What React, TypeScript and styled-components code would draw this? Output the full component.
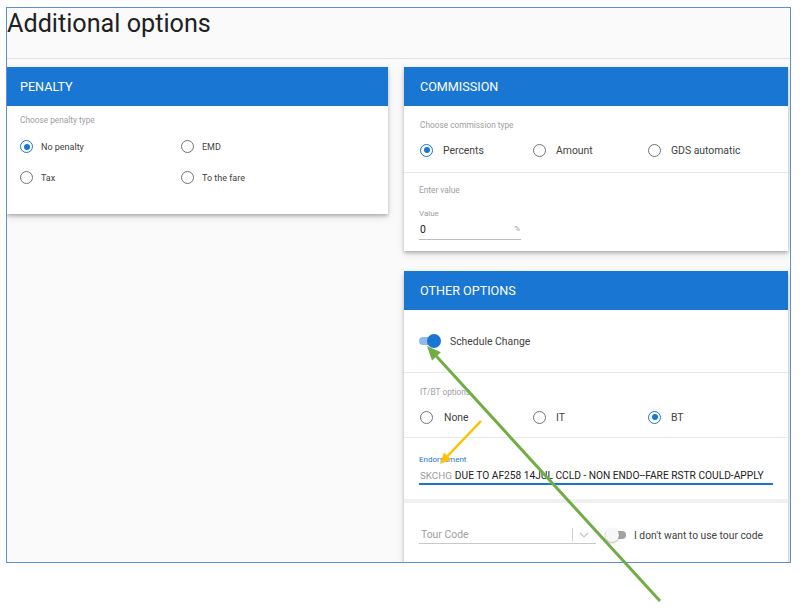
import React from 'react';
import styled, { createGlobalStyle } from 'styled-components';

const Global = createGlobalStyle`
  html, body { margin: 0; padding: 0; background: #ffffff; }
  body { font-family: Roboto, "Noto Sans", Arial, sans-serif; color: #424242; }
  * { box-sizing: border-box; }
`;

const Page = styled.div`
  position: relative;
  width: 800px;
  height: 610px;
  overflow: hidden;
  padding: 7px 0 0 6px;
`;

const Frame = styled.div`
  width: 785px;
  height: 556px;
  border: 1px solid #5b8ee0;
  background: #fafafa;
  overflow: hidden;
`;

const TitleBar = styled.div`
  height: 51px;
  border-bottom: 1px solid #e2e2e2;
  padding-top: 1px;
  font-size: 25.2px;
  line-height: 30px;
  color: #212121;
`;

const Columns = styled.div`
  display: grid;
  grid-template-columns: 381px 384px;
  column-gap: 16px;
  margin-top: 8px;
  align-items: start;
`;

const Stack = styled.div`
  display: flex;
  flex-direction: column;
  gap: 20px;
`;

const Card = styled.div`
  background: #ffffff;
  box-shadow: 0 2px 3px rgba(0, 0, 0, 0.22), 0 3px 8px rgba(0, 0, 0, 0.12);
`;

const CardHeader = styled.div<{ $pl?: number }>`
  height: 39px;
  background: #1976d2;
  color: #ffffff;
  font-size: 12.6px;
  display: flex;
  align-items: center;
  padding-left: ${p => p.$pl ?? 16}px;
`;

const Section = styled.div<{ $pt?: number; $pb?: number; $pl?: number; $border?: boolean }>`
  padding: ${p => p.$pt ?? 0}px 16px ${p => p.$pb ?? 0}px ${p => p.$pl ?? 16}px;
  border-bottom: ${p => (p.$border ? '1px solid #e8e8e8' : 'none')};
`;

const ToggleSection = styled.div`
  height: 63px;
  border-bottom: 1px solid #e8e8e8;
  display: flex;
  align-items: center;
  padding-left: 15px;
  gap: 9px;
  font-size: 10.4px;
  color: #424242;
`;

const Band = styled.div`
  height: 4px;
  background: #f0f0f0;
`;

const Hint = styled.div`
  font-size: 8.3px;
  line-height: 12px;
  color: #9e9e9e;
`;

const PenaltyGrid = styled.div`
  display: grid;
  grid-template-columns: 161px 161px;
  grid-auto-rows: 31px;
  margin-top: 5px;
`;

const RadioRow = styled.div`
  display: flex;
  height: 20px;
  margin-top: 9px;
`;

const RadioItem = styled.label<{ $w?: number; $size?: number; $gap?: number }>`
  display: flex;
  align-items: center;
  gap: ${p => p.$gap ?? 10}px;
  width: ${p => (p.$w ? `${p.$w}px` : 'auto')};
  font-size: ${p => p.$size ?? 10.4}px;
  color: #424242;
`;

const RadioCircle = styled.span<{ $on?: boolean }>`
  width: 13px;
  height: 13px;
  border-radius: 50%;
  border: 1.5px solid ${p => (p.$on ? '#1976d2' : '#737373')};
  display: flex;
  align-items: center;
  justify-content: center;
  flex: none;
  &::after {
    content: '';
    display: ${p => (p.$on ? 'block' : 'none')};
    width: 6px;
    height: 6px;
    border-radius: 50%;
    background: #1976d2;
  }
`;

const SmallLabel = styled.div<{ $blue?: boolean; $mt?: number }>`
  font-size: 8px;
  line-height: 10px;
  margin-top: ${p => p.$mt ?? 0}px;
  color: ${p => (p.$blue ? '#1976d2' : '#9e9e9e')};
`;

const ValueInput = styled.div`
  width: 102px;
  height: 20px;
  margin-top: 1px;
  border-bottom: 1px solid #bdbdbd;
  display: flex;
  justify-content: space-between;
  align-items: center;
  font-size: 10.4px;
  padding-left: 1px;
  color: #212121;
`;

const Unit = styled.span`
  font-size: 8px;
  color: #9e9e9e;
  padding-right: 1px;
  margin-top: -2px;
`;

const EndorseInput = styled.div`
  width: 354px;
  height: 17px;
  margin-top: 3px;
  border-bottom: 2px solid #1976d2;
  display: flex;
  align-items: center;
  gap: 3px;
  padding-left: 1px;
  font-size: 10.2px;
  color: #212121;
  white-space: nowrap;
`;

const Prefix = styled.span`
  color: #9e9e9e;
  font-size: 9.8px;
`;

const TourRow = styled.div`
  display: flex;
  align-items: center;
  padding: 23px 0 40px 15px;
`;

const SelectBox = styled.div`
  width: 177px;
  height: 18px;
  border-bottom: 1px solid #c8c8c8;
  display: flex;
  align-items: center;
  padding-left: 2px;
  font-size: 10.4px;
  color: #9e9e9e;
`;

const SelectText = styled.span`
  flex: 1;
`;

const SelectSep = styled.span`
  width: 1px;
  height: 13px;
  background: #d0d0d0;
  margin-right: 6px;
`;

const SelectChevron = styled.span`
  width: 17px;
  display: flex;
  align-items: center;
`;

const Switch = styled.span<{ $on?: boolean; $ml?: number }>`
  position: relative;
  width: 22px;
  height: 14px;
  flex: none;
  display: inline-block;
  margin-left: ${p => p.$ml ?? 0}px;
  &::before {
    content: '';
    position: absolute;
    left: 0;
    top: 3px;
    width: 21px;
    height: 8px;
    border-radius: 4px;
    background: ${p => (p.$on ? '#8fbbea' : '#a3a3a3')};
  }
  &::after {
    content: '';
    position: absolute;
    top: 0;
    left: ${p => (p.$on ? '8px' : '0')};
    width: 14px;
    height: 14px;
    border-radius: 50%;
    background: ${p => (p.$on ? '#1976d2' : '#f7f7f7')};
    box-shadow: ${p => (p.$on ? 'none' : '0 1px 2px rgba(0,0,0,0.3)')};
  }
`;

const SwitchLabel = styled.span`
  margin-left: 7px;
  font-size: 10.3px;
  color: #424242;
`;

const Overlay = styled.svg`
  position: absolute;
  left: 0;
  top: 0;
  pointer-events: none;
`;

export default function App() {
  return (
    <Page>
      <Global />
      <Frame>
        <TitleBar>Additional options</TitleBar>
        <Columns>
          <Card>
            <CardHeader $pl={13}>PENALTY</CardHeader>
            <Section $pt={8} $pb={21} $pl={13}>
              <Hint>Choose penalty type</Hint>
              <PenaltyGrid>
                <RadioItem $size={9} $gap={8}><RadioCircle $on />No penalty</RadioItem>
                <RadioItem $size={9} $gap={8}><RadioCircle />EMD</RadioItem>
                <RadioItem $size={9} $gap={8}><RadioCircle />Tax</RadioItem>
                <RadioItem $size={9} $gap={8}><RadioCircle />To the fare</RadioItem>
              </PenaltyGrid>
            </Section>
          </Card>
          <Stack>
            <Card>
              <CardHeader>COMMISSION</CardHeader>
              <Section $pt={13} $pb={12} $border>
                <Hint>Choose commission type</Hint>
                <RadioRow>
                  <RadioItem $w={113}><RadioCircle $on />Percents</RadioItem>
                  <RadioItem $w={115}><RadioCircle />Amount</RadioItem>
                  <RadioItem><RadioCircle />GDS automatic</RadioItem>
                </RadioRow>
              </Section>
              <Section $pt={11} $pb={11} $pl={15}>
                <Hint>Enter value</Hint>
                <SmallLabel $mt={13}>Value</SmallLabel>
                <ValueInput>
                  <span>0</span>
                  <Unit>%</Unit>
                </ValueInput>
              </Section>
            </Card>
            <Card>
              <CardHeader>OTHER OPTIONS</CardHeader>
              <ToggleSection>
                <Switch $on />
                Schedule Change
              </ToggleSection>
              <Section $pt={13} $pb={10} $border>
                <Hint>IT/BT options</Hint>
                <RadioRow>
                  <RadioItem $w={113} $gap={11}><RadioCircle />None</RadioItem>
                  <RadioItem $w={115}><RadioCircle />IT</RadioItem>
                  <RadioItem><RadioCircle $on />BT</RadioItem>
                </RadioRow>
              </Section>
              <Section $pt={17} $pb={14} $pl={15}>
                <SmallLabel $blue>Endorsement</SmallLabel>
                <EndorseInput>
                  <Prefix>SKCHG</Prefix>
                  <span>DUE TO AF258 14JUL CCLD - NON ENDO--FARE RSTR COULD-APPLY</span>
                </EndorseInput>
              </Section>
              <Band />
              <TourRow>
                <SelectBox>
                  <SelectText>Tour Code</SelectText>
                  <SelectSep />
                  <SelectChevron>
                    <svg width="10" height="6" viewBox="0 0 10 6">
                      <path d="M1 1 L5 5 L9 1" fill="none" stroke="#c4c4c4" strokeWidth="1.2" />
                    </svg>
                  </SelectChevron>
                </SelectBox>
                <Switch $ml={9} />
                <SwitchLabel>I don't want to use tour code</SwitchLabel>
              </TourRow>
            </Card>
          </Stack>
        </Columns>
      </Frame>
      <Overlay width="800" height="610" viewBox="0 0 800 610">
        <line x1="660" y1="601" x2="436.4" y2="356.3" stroke="#70ad47" strokeWidth="3" />
        <polygon points="427,346 440.9,352.3 432,360.4" fill="#70ad47" />
        <line x1="481" y1="421" x2="447.6" y2="456" stroke="#ffc000" strokeWidth="2.5" />
        <polygon points="440,464 451.2,459.5 444,452.6" fill="#ffc000" />
      </Overlay>
    </Page>
  );
}
